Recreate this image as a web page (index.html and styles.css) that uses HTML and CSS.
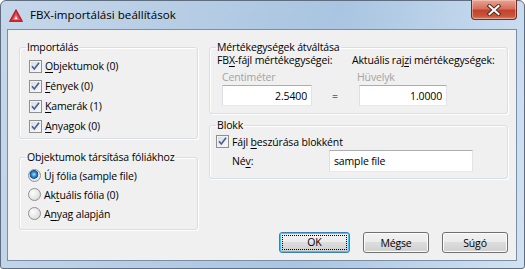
FILE: index.html
```html
<!DOCTYPE html>
<html lang="hu">

<head>
    <meta charset="UTF-8">
    <meta name="viewport" content="width=device-width, initial-scale=1.0">
    <title>FBX-importálási beállítások</title>
    <link rel="stylesheet" href="styles.css">
</head>

<body>
    <div class="window">
        <div class="titlebar">
            <svg class="app-icon" width="14" height="13" viewBox="0 0 14 13">
                <path d="M7 0.5 L13.6 12.5 L0.4 12.5 Z" fill="#d3262d" stroke="#a3141b" stroke-width="0.8" />
                <path d="M7 3.5 L11 11 L3 11 Z" fill="#e9555a" />
                <path d="M7 7 L8.6 10.3 L5.4 10.3 Z" fill="#fff" />
            </svg>
            <span class="title">FBX-importálási beállítások</span>
            <div class="close-btn">
                <svg width="16" height="12" viewBox="0 0 16 12">
                    <path d="M3.5 2 L12.5 10 M12.5 2 L3.5 10" stroke="#5a2a22" stroke-width="4" stroke-linecap="square" />
                    <path d="M3.5 2 L12.5 10 M12.5 2 L3.5 10" stroke="#fff" stroke-width="2" stroke-linecap="square" />
                </svg>
            </div>
        </div>

        <div class="client">
            <div class="columns">
                <div class="column">
                    <fieldset class="group group-import">
                        <legend>Importálás</legend>
                        <div class="option">
                            <span class="check"><svg width="11" height="11" viewBox="0 0 11 11"><path d="M2 5.3 L4.3 8 L9 1.8" fill="none" stroke="#4a5f97" stroke-width="1.7" /></svg></span>
                            <span><u>O</u>bjektumok (0)</span>
                        </div>
                        <div class="option">
                            <span class="check"><svg width="11" height="11" viewBox="0 0 11 11"><path d="M2 5.3 L4.3 8 L9 1.8" fill="none" stroke="#4a5f97" stroke-width="1.7" /></svg></span>
                            <span><u>F</u>ények (0)</span>
                        </div>
                        <div class="option">
                            <span class="check"><svg width="11" height="11" viewBox="0 0 11 11"><path d="M2 5.3 L4.3 8 L9 1.8" fill="none" stroke="#4a5f97" stroke-width="1.7" /></svg></span>
                            <span><u>K</u>amerák (1)</span>
                        </div>
                        <div class="option">
                            <span class="check"><svg width="11" height="11" viewBox="0 0 11 11"><path d="M2 5.3 L4.3 8 L9 1.8" fill="none" stroke="#4a5f97" stroke-width="1.7" /></svg></span>
                            <span><u>A</u>nyagok (0)</span>
                        </div>
                    </fieldset>

                    <fieldset class="group group-layers">
                        <legend>Objektumok társítása fóliákhoz</legend>
                        <div class="option radio-row">
                            <span class="radio selected"></span>
                            <span>Ú<u>j</u> fólia (sample file)</span>
                        </div>
                        <div class="option radio-row">
                            <span class="radio"></span>
                            <span>Ak<u>t</u>uális fólia (0)</span>
                        </div>
                        <div class="option radio-row">
                            <span class="radio"></span>
                            <span>A<u>n</u>yag alapján</span>
                        </div>
                    </fieldset>
                </div>

                <div class="column">
                    <fieldset class="group group-units">
                        <legend>Mértékegységek átváltása</legend>
                        <div class="units">
                            <span class="unit-label">FB<u>X</u>-fájl mértékegységei:</span>
                            <span class="unit-label">Aktuális raj<u>z</u>i mértékegységek:</span>
                            <span class="unit-name">Centiméter</span>
                            <span class="unit-name">Hüvelyk</span>
                            <div class="unit-value">
                                <input class="textbox num" type="text" value="2.5400">
                                <span class="equals">=</span>
                            </div>
                            <div class="unit-value">
                                <input class="textbox num second" type="text" value="1.0000">
                            </div>
                        </div>
                    </fieldset>

                    <fieldset class="group group-block">
                        <legend>Blokk</legend>
                        <div class="option block-option">
                            <span class="check"><svg width="11" height="11" viewBox="0 0 11 11"><path d="M2 5.3 L4.3 8 L9 1.8" fill="none" stroke="#4a5f97" stroke-width="1.7" /></svg></span>
                            <span>Fájl <u>b</u>eszúrása blokként</span>
                        </div>
                        <div class="name-row">
                            <label for="blockName">Né<u>v</u>:</label>
                            <input class="textbox name" id="blockName" type="text" value="sample file">
                        </div>
                    </fieldset>
                </div>
            </div>

            <div class="buttons">
                <button class="btn btn-default"><span class="focus">OK</span></button>
                <button class="btn">Mégse</button>
                <button class="btn">Súgó</button>
            </div>
        </div>
    </div>
</body>

</html>
```

FILE: styles.css
```css
html,
body {
    margin: 0;
    padding: 0;
}

body {
    font-family: "Open Sans", "Noto Sans", sans-serif;
    font-size: 10.5px;
    letter-spacing: -0.15px;
    color: #000;
    background-color: #fff;
}

u {
    text-decoration-thickness: 1px;
    text-underline-offset: 2px;
}

.window {
    width: 525px;
    height: 269px;
    box-sizing: border-box;
    border: 1px solid #5e6e80;
    border-radius: 6px 6px 3px 3px;
    padding: 0 7px 7px 6px;
    background: linear-gradient(100deg, #c6d7ea 0%, #b5cce4 35%, #a9c5e1 60%, #c2d7ec 85%, #d2e2f2 100%);
    display: flex;
    flex-direction: column;
}

.titlebar {
    height: 28px;
    display: flex;
    align-items: flex-start;
}

.app-icon {
    margin: 8px 0 0 2px;
}

.title {
    margin: 6px 0 0 7px;
    font-size: 11.6px;
    letter-spacing: 0;
    line-height: 16px;
    color: #000;
}

.close-btn {
    margin-left: auto;
    margin-top: -1px;
    width: 46px;
    height: 20px;
    box-sizing: border-box;
    border: 1px solid #6e2c24;
    border-top: none;
    border-radius: 0 0 4px 4px;
    background: linear-gradient(#e7a493 0%, #d6705c 45%, #c1432e 55%, #c8553a 85%, #d9846b 100%);
    box-shadow: inset 0 0 0 1px rgba(255, 220, 210, 0.45);
    display: flex;
    justify-content: center;
    align-items: center;
}

.client {
    height: 232px;
    box-sizing: border-box;
    border: 1px solid #7b8ea3;
    background-color: #f0f0f0;
    padding: 10px 8px 0 11px;
}

.columns {
    display: flex;
    gap: 11px;
}

.column {
    display: flex;
    flex-direction: column;
}

.column:first-child {
    width: 179px;
    gap: 11px;
}

.column:last-child {
    width: 299px;
    gap: 4px;
}

.group {
    margin: 0;
    padding: 0 6px;
    min-width: 0;
    border: 1px solid #d5dfe5;
    border-radius: 3px;
    box-sizing: border-box;
    box-shadow: inset 1px 1px 0 #fff, 1px 1px 0 #fff;
}

.group legend {
    padding: 0 1px;
    line-height: 14px;
}

.group-import {
    height: 99px;
    padding-top: 2px;
}

.group-layers {
    height: 80px;
    padding-top: 2px;
}

.group-units {
    height: 74px;
}

.group-block {
    height: 61px;
    padding-top: 1px;
}

.option {
    display: flex;
    align-items: center;
    height: 20px;
}

.group-import .option {
    padding-left: 3px;
}

.radio-row {
    height: 19px;
    padding-left: 2px;
}

.block-option {
    height: 17px;
}

.check {
    width: 13px;
    height: 13px;
    box-sizing: border-box;
    border: 1px solid #8e8f8f;
    background: linear-gradient(135deg, #d6d9de 0%, #eceef1 55%, #fbfbfb 100%);
    box-shadow: inset 0 0 0 1px #f3f3f3;
    margin-right: 3px;
    display: flex;
    flex-shrink: 0;
}

.radio {
    width: 13px;
    height: 13px;
    box-sizing: border-box;
    border: 1px solid #8e8f8f;
    border-radius: 50%;
    background: radial-gradient(circle at 35% 35%, #fdfdfd 0%, #e6e6e6 55%, #cfd1d4 100%);
    margin-right: 3px;
    flex-shrink: 0;
}

.radio.selected {
    background: radial-gradient(circle at 45% 40%, #aee0fb 0%, #2f86c8 28%, #134f92 45%, #dfe2e6 52%, #f3f3f3 80%, #d6d8db 100%);
}

.units {
    display: grid;
    grid-template-columns: 135px 1fr;
    margin-left: 1px;
}

.unit-label {
    line-height: 13px;
    white-space: nowrap;
}

.unit-name {
    color: #a3a3a3;
    line-height: 14px;
    margin-top: 3px;
    padding-left: 5px;
}

.unit-value {
    display: flex;
    align-items: center;
    margin-top: 1px;
}

.textbox {
    font-family: inherit;
    font-size: 10.5px;
    letter-spacing: -0.15px;
    color: #000;
    height: 21px;
    box-sizing: border-box;
    margin: 0;
    border: 1px solid;
    border-color: #abadb3 #e2e3ea #e3e9ef #dbdfe6;
    background-color: #fff;
    outline: none;
}

.num {
    width: 90px;
    margin-left: 5px;
    text-align: right;
    padding: 0 4px 0 4px;
}

.num.second {
    width: 88px;
    margin-left: 7px;
}

.equals {
    flex: 1;
    text-align: center;
    padding-left: 6px;
}

.name-row {
    display: flex;
    align-items: center;
    margin-top: 0;
}

.name-row label {
    width: 97px;
    margin-left: 16px;
}

.name {
    width: 144px;
    height: 22px;
    padding: 0 4px;
}

.buttons {
    display: flex;
    justify-content: flex-end;
    gap: 13px;
    margin-top: 2px;
}

.btn {
    font-family: inherit;
    font-size: 10.5px;
    letter-spacing: -0.15px;
    color: #000;
    width: 66px;
    height: 21px;
    padding: 0;
    border: 1px solid #707070;
    border-radius: 3px;
    background: linear-gradient(#f2f2f2 0%, #ebebeb 50%, #dddddd 50%, #cfcfcf 100%);
    box-shadow: inset 0 0 0 1px #fcfcfc;
}

.btn-default {
    width: 71px;
    border-color: #3c7fb1;
    box-shadow: inset 0 0 0 1px #48c3f3;
    padding: 2px;
}

.btn-default .focus {
    display: block;
    height: 100%;
    box-sizing: border-box;
    border: 1px dotted #000;
    line-height: 13px;
}
```
